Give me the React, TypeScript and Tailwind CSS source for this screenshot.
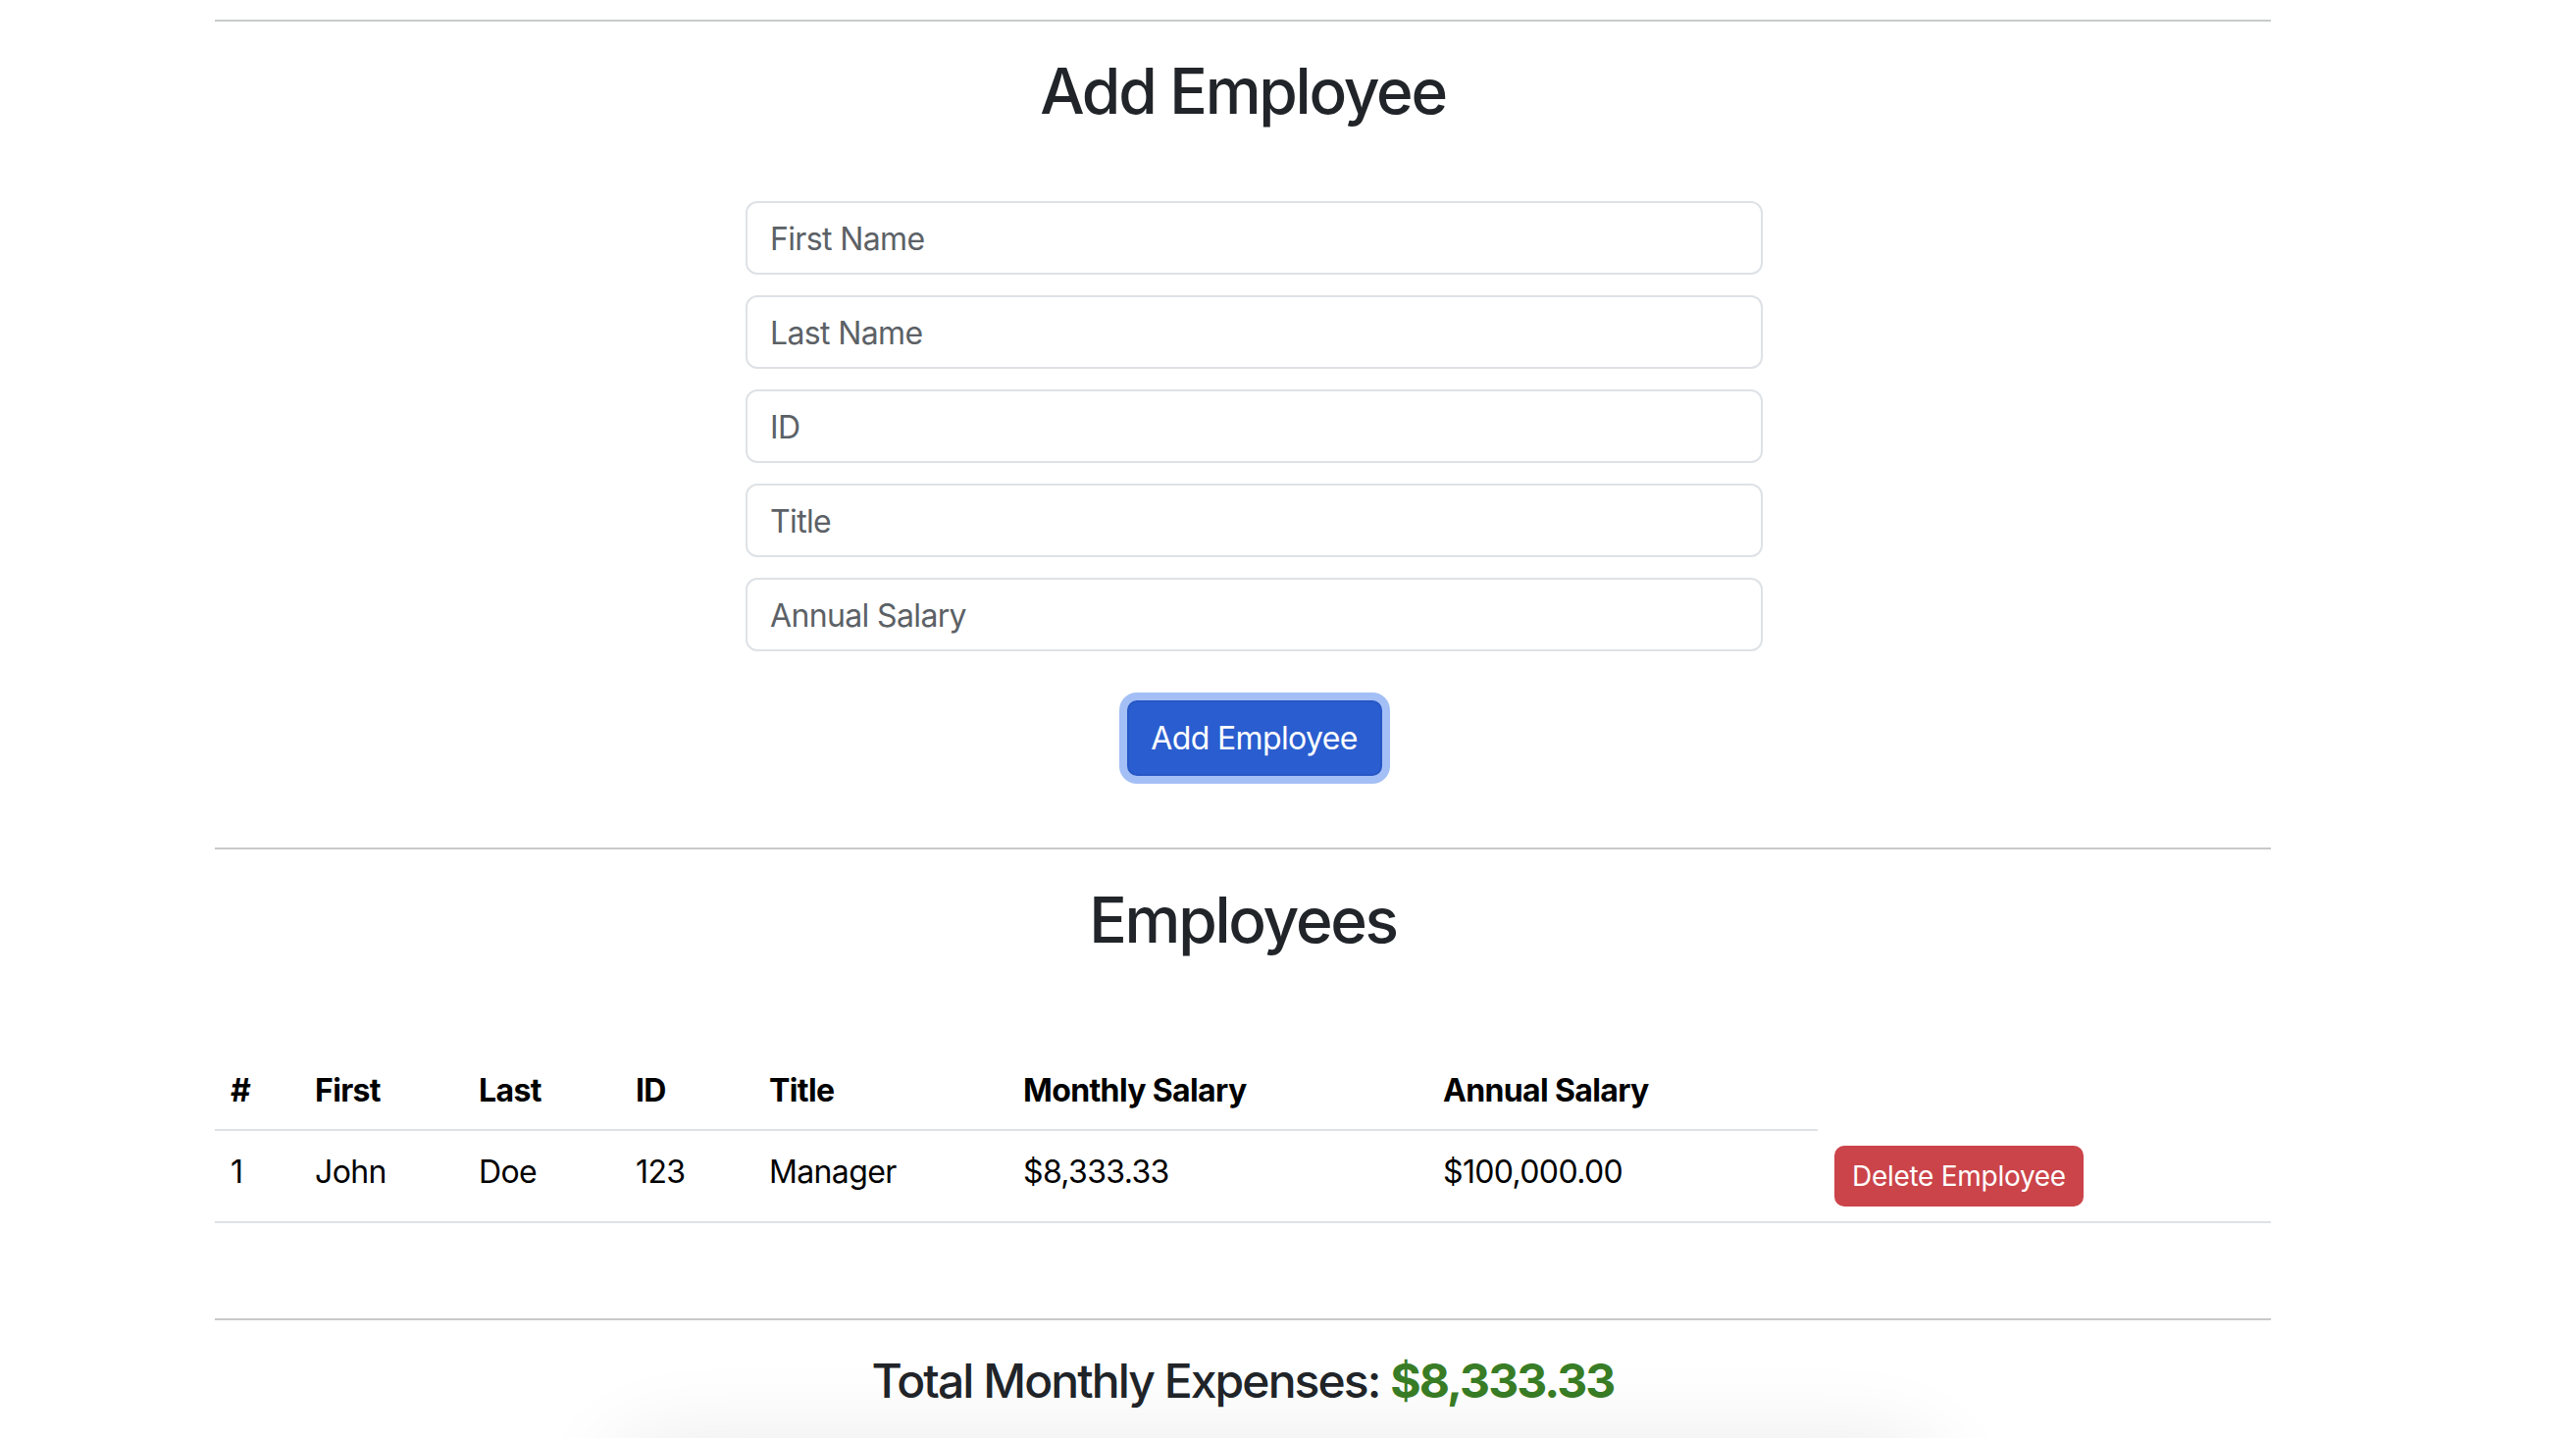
import React from "react";

const cols = [86, 167, 160, 136, 259, 428, 398, 462];

export default function App() {
  const inputs = ["First Name", "Last Name", "ID", "Title", "Annual Salary"];
  const headers = ["#", "First", "Last", "ID", "Title", "Monthly Salary", "Annual Salary"];
  const row = ["1", "John", "Doe", "123", "Manager", "$8,333.33", "$100,000.00"];
  return (
    <div className="relative h-[1466px] w-full overflow-hidden bg-white font-['Inter','Liberation_Sans',sans-serif] text-[#212529]">
      <div className="ml-[219px] w-[2096px] pt-[20px]">
        <hr className="h-[2px] border-0 bg-[#c8c9ca]" />
        <h2 className="mt-[32px] text-center text-[64px] font-medium leading-[77px] tracking-[-0.035em]">
          Add Employee
        </h2>
        <form className="ml-[541px] mt-[74px] flex w-[1037px] flex-col gap-[21px]" onSubmit={(e) => e.preventDefault()}>
          {inputs.map((p) => (
            <input
              key={p}
              type="text"
              placeholder={p}
              className="h-[75px] w-full rounded-[12px] border-2 border-[#dee2e6] bg-white px-[23px] pt-[2px] text-[32px] leading-[48px] text-[#212529] tracking-[-0.02em] outline-none placeholder:text-[#5c6166]"
            />
          ))}
          <div className="mt-[29px] flex justify-center">
            <button
              type="submit"
              className="h-[77px] w-[260px] rounded-[10px] border-2 border-[#2756c6] bg-[#2a5dcf] text-[32px] leading-[48px] tracking-[-0.02em] text-white shadow-[0_0_0_8px_#a3bff5]"
            >
              Add Employee
            </button>
          </div>
        </form>
        <hr className="mt-[73px] h-[2px] border-0 bg-[#c8c9ca]" />
        <h2 className="mt-[33px] text-center text-[64px] font-medium leading-[77px] tracking-[-0.035em]">
          Employees
        </h2>
        <table className="mt-[97px] w-[2096px] table-fixed border-collapse text-left text-[32px] leading-[48px] tracking-[-0.02em] text-black">
          <colgroup>
            {cols.map((w, i) => (
              <col key={i} style={{ width: w }} />
            ))}
          </colgroup>
          <thead>
            <tr>
              {headers.map((h) => (
                <th key={h} className="border-b-2 border-[#dee2e6] px-[16px] py-[15px] align-top font-bold">
                  {h}
                </th>
              ))}
            </tr>
          </thead>
          <tbody>
            <tr className="border-b-2 border-[#dee2e6]">
              {row.map((c, i) => (
                <td key={i} className="px-[16px] pb-[15px] pt-[18px] align-top">
                  {c}
                </td>
              ))}
              <td className="px-[17px] pb-[15px] pt-[16px] align-top">
                <button
                  type="button"
                  className="h-[62px] whitespace-nowrap rounded-[10px] bg-[#cb444a] px-[18px] text-[28px] leading-[42px] tracking-[-0.01em] text-white"
                >
                  Delete Employee
                </button>
              </td>
            </tr>
          </tbody>
        </table>
        <hr className="mt-[97px] h-[2px] border-0 bg-[#c8c9ca]" />
        <h4 className="mt-[33px] text-center text-[48px] font-medium leading-[58px] tracking-[-0.04em]">
          Total Monthly Expenses: <span className="font-bold text-[#397d26]">$8,333.33</span>
        </h4>
      </div>
      <div className="absolute left-[640px] top-[1490px] h-[120px] w-[1320px] rounded-[40px] bg-white shadow-[0_0_90px_20px_rgba(0,0,0,0.09)]" />
    </div>
  );
}
